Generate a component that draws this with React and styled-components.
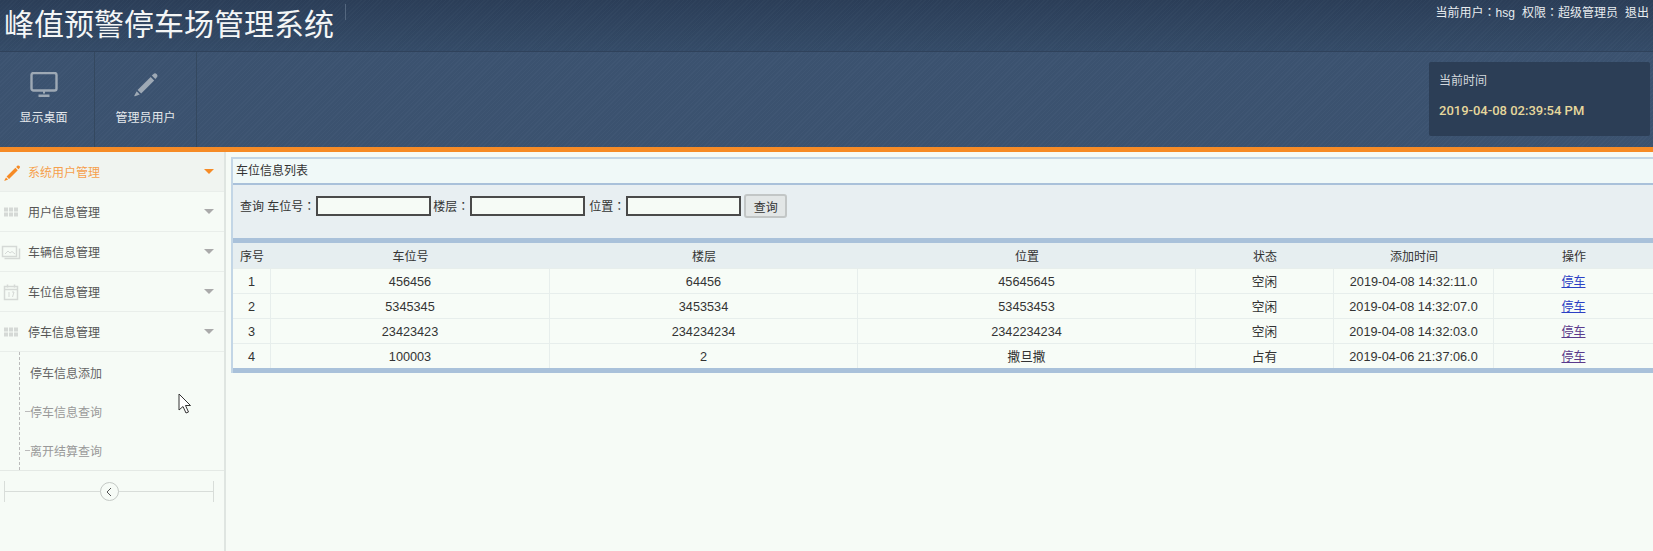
import React from "react";
import styled, { createGlobalStyle } from "styled-components";

const GlobalStyle = createGlobalStyle`
  html, body {
    margin: 0;
    padding: 0;
    background: #f6fbf6;
    overflow: hidden;
  }
  * {
    box-sizing: border-box;
  }
  body {
    font-family: "Liberation Sans", "Noto Sans CJK SC", sans-serif;
    font-size: 12px;
    color: #333;
  }
`;

const texture = `repeating-linear-gradient(
  135deg,
  rgba(255, 255, 255, 0.014) 0,
  rgba(255, 255, 255, 0.014) 1px,
  rgba(0, 0, 0, 0.014) 1px,
  rgba(0, 0, 0, 0.014) 3px
)`;

const Page = styled.div`
  width: 1653px;
  height: 551px;
  position: relative;
  overflow: hidden;
  display: flex;
  flex-direction: column;
`;

const TopBar = styled.header`
  height: 52px;
  display: flex;
  justify-content: space-between;
  background: ${texture}, linear-gradient(#2c3f59, #354c69);
  border-bottom: 1px solid #2f425b;
`;

const Brand = styled.div`
  display: flex;
  align-items: flex-start;
`;

const Title = styled.h1`
  margin: 0;
  padding: 0 0 0 4px;
  font-family: "Noto Sans CJK SC", sans-serif;
  font-size: 30px;
  font-weight: 400;
  line-height: 44px;
  color: #f4f6f6;
`;

const TitleRule = styled.span`
  width: 1px;
  height: 16px;
  margin: 4px 0 0 11px;
  background: #54677f;
`;

const UserInfo = styled.div`
  padding: 5px 4px 0 0;
  line-height: 17px;
  font-family: "Liberation Sans", "Noto Sans CJK TC", sans-serif;
  color: #e8ecef;
  display: flex;
  gap: 7px;
`;

const NavBar = styled.nav`
  height: 95px;
  display: flex;
  justify-content: space-between;
  background: ${texture}, #3c5371;
`;

const NavList = styled.div`
  display: flex;
`;

const NavItem = styled.div`
  width: ${(p) => p.$w}px;
  border-right: 1px solid #34485f;
  display: flex;
  flex-direction: column;
  align-items: center;
  padding: 20px ${(p) => p.$inset || 0}px 0 0;
  color: #e4e8ec;
`;

const NavIcon = styled.svg`
  width: 28px;
  height: 26px;
  color: #9ea9b5;
`;

const NavLabel = styled.span`
  margin-top: 12px;
  line-height: 17px;
`;

const ClockBox = styled.div`
  width: 221px;
  height: 74px;
  margin: 10px 3px 0 0;
  padding: 11px 10px;
  background: #2c3e56;
  border-radius: 2px;
`;

const ClockLabel = styled.div`
  line-height: 17px;
  color: #d3d8dd;
`;

const ClockValue = styled.div`
  margin-top: 12px;
  line-height: 17px;
  font-family: Roboto, "Liberation Sans", sans-serif;
  font-size: 13px;
  font-weight: 500;
  color: #e6d79c;
`;

const Stripe = styled.div`
  height: 5px;
  background: #f68b26;
`;

const Body = styled.div`
  flex: 1;
  display: flex;
  min-height: 0;
`;

const Side = styled.aside`
  width: 226px;
  flex-shrink: 0;
  background: #f6fbf6;
  border-right: 2px solid #dfe5e1;
`;

const MenuRow = styled.div`
  height: 40px;
  display: flex;
  align-items: center;
  padding-right: 10px;
  background: ${(p) => (p.$active ? "#f0f4f0" : "transparent")};
  border-bottom: 1px solid #e9eeea;
  color: ${(p) => (p.$active ? "#f6a04d" : "#555")};
`;

const MenuIcon = styled.svg`
  width: 20px;
  height: 20px;
  margin: 0 7px 0 1px;
  flex-shrink: 0;
`;

const MenuText = styled.span`
  flex: 1;
`;

const Caret = styled.span`
  width: 0;
  height: 0;
  border-left: 5px solid transparent;
  border-right: 5px solid transparent;
  border-top: 5px solid ${(p) => (p.$active ? "#f68b26" : "#aaa")};
`;

const SubList = styled.div`
  height: 119px;
  position: relative;
  border-bottom: 1px solid #e4e9e5;
  padding-top: 1px;
  &::before {
    content: "";
    position: absolute;
    left: 19px;
    top: 0;
    bottom: 0;
    border-left: 1px dashed #bbb;
  }
`;

const SubRow = styled.div`
  height: 39px;
  display: flex;
  align-items: center;
  padding-left: 30px;
  position: relative;
  color: ${(p) => (p.$strong ? "#666" : "#999")};
  &::before {
    content: "";
    display: ${(p) => (p.$strong ? "none" : "block")};
    position: absolute;
    left: 25px;
    width: 5px;
    border-top: 1px dashed #bbb;
  }
`;

const Collapse = styled.div`
  height: 21px;
  margin: 10px 10px 0 4px;
  display: flex;
  align-items: center;
  justify-content: center;
  position: relative;
  border-left: 1px solid #d8ddd9;
  border-right: 1px solid #d8ddd9;
  &::before {
    content: "";
    position: absolute;
    left: 0;
    right: 0;
    top: 10px;
    border-top: 1px solid #d8ddd9;
  }
`;

const CollapseBtn = styled.span`
  width: 19px;
  height: 19px;
  border-radius: 50%;
  border: 1px solid #c4c9c5;
  background: #f6fbf6;
  position: relative;
  display: flex;
  align-items: center;
  justify-content: center;
`;

const Main = styled.main`
  flex: 1;
  min-width: 0;
  padding: 5px 0 0 5px;
`;

const Panel = styled.section`
  border-top: 2px solid #c3d6e6;
  border-left: 2px solid #c3d6e6;
`;

const PanelTitle = styled.div`
  height: 26px;
  line-height: 25px;
  padding-left: 3px;
  background: #f0f9f8;
  border-bottom: 2px solid #a9c1da;
  color: #333;
`;

const SearchForm = styled.form`
  height: 58px;
  padding: 9px 0 0 7px;
  background: #e8eff2;
  display: flex;
  align-items: flex-start;
  border-bottom: 5px solid #a9c1da;
  font-family: "Liberation Sans", "Noto Sans CJK TC", sans-serif;
`;

const SearchLabel = styled.label`
  line-height: 27px;
  margin: 0 1px 0 ${(p) => p.$gap || 0}px;
  color: #333;
`;

const SearchInput = styled.input`
  width: 115px;
  height: 20px;
  margin-top: 2px;
  background: #f6fbf6;
  border: 2px solid #4a4a4a;
  padding: 0;
`;

const SearchButton = styled.button`
  width: 43px;
  height: 24px;
  margin-left: 3px;
  padding: 0;
  background: #e2e6e6;
  border: 2px solid #c2c6c6;
  border-radius: 3px;
  font: inherit;
  color: #333;
`;

const Table = styled.table`
  width: 1421px;
  table-layout: fixed;
  border-collapse: separate;
  border-spacing: 0;
  border-bottom: 5px solid #a9c1da;
  background: #f7fcf7;
`;

const HeadCell = styled.th`
  height: 25px;
  padding: 0;
  font-weight: 400;
  background: #e6eef0;
  color: #333;
  text-align: center;
`;

const Cell = styled.td`
  height: 25px;
  padding: 1px 0 0;
  font-size: 12.7px;
  line-height: 20px;
  text-align: center;
  color: #333;
  border-right: 1px solid #e7eeec;
  border-top: 1px solid #e7eeec;
`;

const ActionLink = styled.a`
  font-size: 12px;
  color: ${(p) => (p.$visited ? "#5a3a8c" : "#2c3fc4")};
  text-decoration: underline;
`;

const Pointer = styled.svg`
  position: absolute;
  left: 178px;
  top: 393px;
  width: 14px;
  height: 22px;
`;

const columns = [38, 279, 308, 338, 138, 160, 160];
const heads = ["序号", "车位号", "楼层", "位置", "状态", "添加时间", "操作"];

const rows = [
  ["1", "456456", "64456", "45645645", "空闲", "2019-04-08 14:32:11.0", false],
  ["2", "5345345", "3453534", "53453453", "空闲", "2019-04-08 14:32:07.0", false],
  ["3", "23423423", "234234234", "2342234234", "空闲", "2019-04-08 14:32:03.0", true],
  ["4", "100003", "2", "撒旦撒", "占有", "2019-04-06 21:37:06.0", true],
];

const PencilShape = ({ color }) => (
  <path
    fill={color}
    d="M16.6 1.6c.8-.8 1.9-.6 2.6.2.7.7.8 1.7.1 2.4l-1.3 1.4-2.8-2.7zM14.3 4l2.8 2.8L6.6 17.4l-2.9-2.9zM3 15.6l2.5 2.5-3.8 1.5c-.5.2-.8-.2-.6-.6z"
  />
);

const GridShape = () => (
  <g fill="#d5d9d6">
    {[3, 8, 13].map((x) =>
      [5.5, 10.5].map((y) => <rect key={`${x}-${y}`} x={x} y={y} width="4" height="4" />)
    )}
  </g>
);

const PhotoShape = () => (
  <g fill="none" stroke="#d5d9d6">
    <rect x="1.5" y="4.5" width="14" height="10" strokeWidth="1.5" />
    <path d="M3.5 16.5h15v-10" strokeWidth="1.5" />
    <path d="M4 12l3-3 2 2 2-1.500 3 2.500" strokeWidth="1" />
  </g>
);

const CalendarShape = () => (
  <g fill="none" stroke="#d5d9d6">
    <rect x="3.500" y="4.500" width="13" height="13" strokeWidth="1.500" />
    <path d="M3.500 7.500h13M6.500 2.500v3M13.500 2.500v3" strokeWidth="1.500" />
    <path d="M8 10v5M11 10h2l-1.500 5" strokeWidth="1" />
  </g>
);

const menu = [
  { label: "系统用户管理", active: true, box: "-3 -3 24 24", icon: <PencilShape color="#f68b26" /> },
  { label: "用户信息管理", icon: <GridShape /> },
  { label: "车辆信息管理", icon: <PhotoShape /> },
  { label: "车位信息管理", icon: <CalendarShape /> },
  { label: "停车信息管理", icon: <GridShape /> },
];

const subMenu = ["停车信息添加", "停车信息查询", "离开结算查询"];

const App = () => {
  return (
    <Page>
      <GlobalStyle />
      <TopBar>
        <Brand>
          <Title>峰值预警停车场管理系统</Title>
          <TitleRule />
        </Brand>
        <UserInfo>
          <span>当前用户：hsg</span>
          <span>权限：超级管理员</span>
          <span>退出</span>
        </UserInfo>
      </TopBar>
      <NavBar>
        <NavList>
          <NavItem $w={95} $inset={7}>
            <NavIcon viewBox="0 0 28 26">
              <rect x="1.500" y="1" width="25" height="17.500" rx="2" fill="none" stroke="currentColor" strokeWidth="2.400" />
              <path d="M13 18.500h2v3h-2zM8.500 22.500h11v2.500h-11z" fill="currentColor" />
            </NavIcon>
            <NavLabel>显示桌面</NavLabel>
          </NavItem>
          <NavItem $w={102}>
            <NavIcon viewBox="0 0 21 21">
              <PencilShape color="currentColor" />
            </NavIcon>
            <NavLabel>管理员用户</NavLabel>
          </NavItem>
        </NavList>
        <ClockBox>
          <ClockLabel>当前时间</ClockLabel>
          <ClockValue>2019-04-08 02:39:54 PM</ClockValue>
        </ClockBox>
      </NavBar>
      <Stripe />
      <Body>
        <Side>
          {menu.map((item) => (
            <MenuRow key={item.label} $active={item.active}>
              <MenuIcon viewBox={item.box || "0 0 20 20"}>{item.icon}</MenuIcon>
              <MenuText>{item.label}</MenuText>
              <Caret $active={item.active} />
            </MenuRow>
          ))}
          <SubList>
            {subMenu.map((label, i) => (
              <SubRow key={label} $strong={i === 0}>
                {label}
              </SubRow>
            ))}
          </SubList>
          <Collapse>
            <CollapseBtn>
              <svg width="8" height="10" viewBox="0 0 8 10">
                <path d="M6 1L2 5l4 4" fill="none" stroke="#555" />
              </svg>
            </CollapseBtn>
          </Collapse>
        </Side>
        <Main>
          <Panel>
            <PanelTitle>车位信息列表</PanelTitle>
            <SearchForm>
              <SearchLabel>查询 车位号：</SearchLabel>
              <SearchInput />
              <SearchLabel $gap={2}>楼层：</SearchLabel>
              <SearchInput />
              <SearchLabel $gap={4}>位置：</SearchLabel>
              <SearchInput />
              <SearchButton type="button">查询</SearchButton>
            </SearchForm>
            <Table>
              <colgroup>
                {columns.map((w, i) => (
                  <col key={i} style={{ width: w }} />
                ))}
              </colgroup>
              <thead>
                <tr>
                  {heads.map((h) => (
                    <HeadCell key={h}>{h}</HeadCell>
                  ))}
                </tr>
              </thead>
              <tbody>
                {rows.map((r) => (
                  <tr key={r[0]}>
                    {r.slice(0, 6).map((v, i) => (
                      <Cell key={i}>{v}</Cell>
                    ))}
                    <Cell>
                      <ActionLink href="#" $visited={r[6]}>
                        停车
                      </ActionLink>
                    </Cell>
                  </tr>
                ))}
              </tbody>
            </Table>
          </Panel>
        </Main>
      </Body>
      <Pointer viewBox="0 0 14 22">
        <path d="M1 1v16l4-3.500 3 6.500 2.500-1-3-6.500h5z" fill="#fff" stroke="#333" strokeWidth="1" />
      </Pointer>
    </Page>
  );
};

export default App;
